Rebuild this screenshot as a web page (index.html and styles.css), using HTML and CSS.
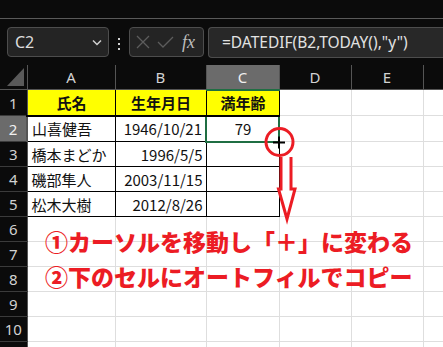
FILE: index.html
```html
<!DOCTYPE html>
<html>
<head>
    <title>DATEDIF</title>
    <link rel="stylesheet" href="styles.css">
</head>
<body>
    <!-- Title strip -->
    <div class="titlebar"></div>

    <!-- Formula bar -->
    <div class="formula-bar">
        <div class="name-box">
            <span>C2</span>
            <svg class="chevron" width="10" height="7" viewBox="0 0 10 7"><path d="M1 1.5 L5 5.5 L9 1.5" fill="none" stroke="#d0d0d0" stroke-width="1.5"/></svg>
        </div>
        <svg class="dots" width="20" height="12" viewBox="0 0 20 12">
            <rect x="9" y="0" width="2" height="2" fill="#d0d0d0"/>
            <rect x="9" y="5" width="2" height="2" fill="#d0d0d0"/>
            <rect x="9" y="10" width="2" height="2" fill="#d0d0d0"/>
        </svg>
        <div class="fx-box">
            <svg width="14" height="14" viewBox="0 0 14 14"><path d="M1 1 L13 13 M13 1 L1 13" stroke="#5c5c5c" stroke-width="1.3"/></svg>
            <svg width="17" height="12" viewBox="0 0 17 12"><path d="M1 6 L6 11 L16 1" fill="none" stroke="#5c5c5c" stroke-width="1.3"/></svg>
            <span class="fx">fx</span>
        </div>
        <div class="formula">=DATEDIF(B2,TODAY(),"y")</div>
    </div>

    <!-- Sheet -->
    <div class="sheet">
        <table class="grid">
            <colgroup>
                <col class="col-head">
                <col class="col-a">
                <col class="col-b">
                <col class="col-c">
                <col class="col-d">
                <col class="col-e">
                <col class="col-f">
            </colgroup>
            <tr class="head-row">
                <th class="corner"><svg width="27" height="24" viewBox="0 0 27 24"><path d="M24 3 L24 21 L7 21 Z" fill="#5a5a5a"/></svg></th>
                <th>A</th><th>B</th><th class="sel-col">C</th><th>D</th><th>E</th><th></th>
            </tr>
            <tr class="r1">
                <th>1</th>
                <td class="title box">氏名</td>
                <td class="title box">生年月日</td>
                <td class="title box">満年齢</td>
                <td></td><td></td><td></td>
            </tr>
            <tr class="r2">
                <th class="sel-row">2</th>
                <td class="box">山喜健吾</td>
                <td class="box num">1946/10/21</td>
                <td class="box active">79</td>
                <td></td><td></td><td></td>
            </tr>
            <tr>
                <th>3</th>
                <td class="box">橋本まどか</td>
                <td class="box num">1996/5/5</td>
                <td class="box"></td>
                <td></td><td></td><td></td>
            </tr>
            <tr>
                <th>4</th>
                <td class="box">磯部隼人</td>
                <td class="box num">2003/11/15</td>
                <td class="box"></td>
                <td></td><td></td><td></td>
            </tr>
            <tr>
                <th>5</th>
                <td class="box">松木大樹</td>
                <td class="box num">2012/8/26</td>
                <td class="box"></td>
                <td></td><td></td><td></td>
            </tr>
            <tr><th>6</th><td></td><td></td><td></td><td></td><td></td><td></td></tr>
            <tr><th>7</th><td></td><td></td><td></td><td></td><td></td><td></td></tr>
            <tr><th>8</th><td></td><td></td><td></td><td></td><td></td><td></td></tr>
            <tr><th>9</th><td></td><td></td><td></td><td></td><td></td><td></td></tr>
            <tr><th>10</th><td></td><td></td><td></td><td></td><td></td><td></td></tr>
            <tr><th></th><td></td><td></td><td></td><td></td><td></td><td></td></tr>
        </table>

        <!-- Red annotation over the grid -->
        <svg class="marker" width="443" height="282" viewBox="0 0 443 282">
            <circle cx="279.5" cy="77" r="13.5" fill="none" stroke="#ec1c24" stroke-width="3"/>
            <path d="M273 77.5 H285 M279 71.5 V83.5" stroke="#000" stroke-width="2"/>
            <path d="M281 92 V124 H278.5 L287 154 L295 124 H291 V92" fill="#fff" stroke="#ec1c24" stroke-width="3" stroke-linejoin="miter"/>
        </svg>
        <div class="note">
            <p>①カーソルを移動し「＋」に変わる</p>
            <p>②下のセルにオートフィルでコピー</p>
        </div>
    </div>
</body>
</html>
```

FILE: styles.css
```css
:root {
    --dark: #0b0b0b;
    --box-bg: #242424;
    --box-border: #4d4d4d;
    --head-text: #d2d2d2;
    --head-line: #3b3b3b;
    --selected: #6b6b6b;
    --green: #1f6e43;
    --gridline: #dedede;
    --red: #ec1c24;
}

* {
    margin: 0;
    padding: 0;
    box-sizing: border-box;
}

body {
    background-color: var(--dark);
    font-family: "Noto Sans", "Noto Sans CJK JP", sans-serif;
    width: 443px;
    height: 347px;
    overflow: hidden;
}

/* Title strip */
.titlebar {
    height: 19px;
    border-bottom: 1px solid #5a5a5a;
}

/* Formula bar */
.formula-bar {
    height: 46px;
    display: flex;
    align-items: flex-start;
    padding-top: 8px;
    padding-left: 7px;
}

.name-box {
    width: 102px;
    height: 30px;
    background-color: var(--box-bg);
    border: 1px solid var(--box-border);
    border-radius: 4px;
    display: flex;
    align-items: center;
    justify-content: space-between;
    padding: 0 6px 0 7px;
    color: #dcdcdc;
    font-size: 16px;
}

.dots {
    margin-top: 11px;
}

.fx-box {
    width: 75px;
    height: 30px;
    background-color: var(--box-bg);
    border: 1px solid var(--box-border);
    border-radius: 4px;
    display: flex;
    align-items: center;
    gap: 7px;
    padding-left: 6px;
}

.fx {
    font-family: "Liberation Serif", serif;
    font-style: italic;
    font-size: 18px;
    color: #bdbdbd;
    margin-left: 1px;
}

.formula {
    flex: 1;
    height: 31px;
    margin-left: 4px;
    background-color: #282828;
    border: 1px solid var(--box-border);
    border-right: none;
    border-radius: 4px 0 0 4px;
    padding-left: 13px;
    color: #e2e2e2;
    font-size: 15.5px;
    line-height: 29px;
    white-space: nowrap;
}

/* Sheet */
.sheet {
    position: relative;
    height: 282px;
    overflow: hidden;
}

.grid {
    border-collapse: collapse;
    table-layout: fixed;
    width: 443px;
    background-color: #fff;
}

.col-head { width: 27px; }
.col-a { width: 88px; }
.col-b { width: 91px; }
.col-c { width: 73px; }
.col-d { width: 72px; }
.col-e { width: 72px; }
.col-f { width: 20px; }

.grid tr {
    height: 25px;
}

.grid .head-row {
    height: 24px;
}

.grid .r1,
.grid .r2 {
    height: 26px;
}

.grid th {
    background-color: var(--dark);
    color: var(--head-text);
    font-weight: normal;
    font-size: 15px;
    border: 1px solid var(--head-line);
    padding: 0;
}

.head-row th {
    border-top: none;
    border-bottom-color: #555;
    border-left-color: #555;
    border-right-color: #555;
}

.grid tr th:first-child {
    border-right-color: #555;
    border-left: none;
}

.corner svg {
    display: block;
}

.grid th.sel-col {
    background-color: var(--selected);
    color: #f0f0f0;
    border-bottom: 2px solid var(--green);
}

.grid th.sel-row {
    background-color: var(--selected);
    color: #f0f0f0;
    border-right: 2px solid var(--green);
}

.grid td {
    border: 1px solid var(--gridline);
    padding: 0 3px 0 4px;
    font-family: "Noto Sans CJK JP", sans-serif;
    font-size: 15px;
    color: #111;
    white-space: nowrap;
    overflow: hidden;
}

.grid td.box {
    border: 1px solid #000;
}

.grid td.title {
    background-color: #ffff00;
    font-weight: bold;
    text-align: center;
    border-bottom: 2px solid #000;
}

.grid td.num {
    text-align: right;
}

.grid td.active {
    text-align: center;
    border: 2px solid var(--green);
}

/* Annotation */
.marker {
    position: absolute;
    left: 0;
    top: 0;
}

.note {
    position: absolute;
    left: 45px;
    top: 159px;
    color: var(--red);
    font-family: "Noto Sans CJK JP", sans-serif;
    font-weight: 900;
    font-size: 23px;
    line-height: 35px;
    white-space: nowrap;
}
```
